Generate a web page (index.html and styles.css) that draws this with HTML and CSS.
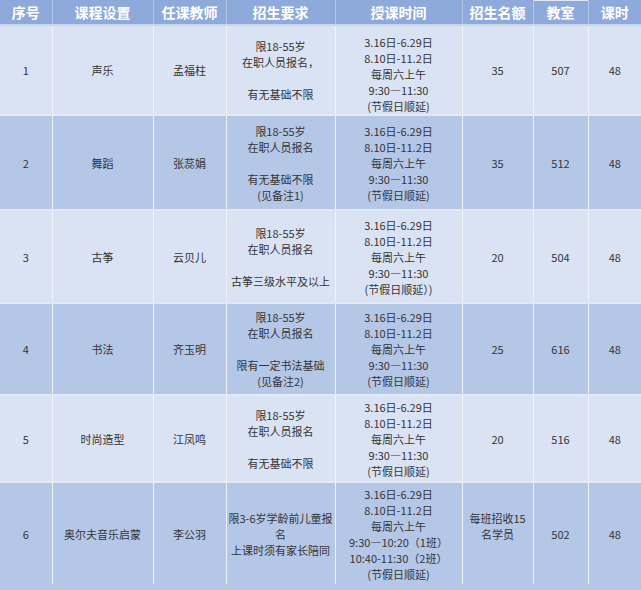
FILE: index.html
```html
<!DOCTYPE html>
<html lang="zh">
<head>
<meta charset="utf-8">
<title>课程表</title>
<link rel="stylesheet" href="styles.css">
</head>
<body>
<table class="sched">
  <colgroup>
    <col class="c1"><col class="c2"><col class="c3"><col class="c4"><col class="c5"><col class="c6"><col class="c7"><col class="c8">
  </colgroup>
  <thead>
    <tr class="head">
      <th>序号</th><th>课程设置</th><th>任课教师</th><th>招生要求</th><th>授课时间</th><th>招生名额</th><th class="sel">教室</th><th>课时</th>
    </tr>
  </thead>
  <tbody>
    <tr class="light r1">
      <td>1</td><td>声乐</td><td>孟福柱</td>
      <td>限18-55岁<br>在职人员报名，<br><br>有无基础不限</td>
      <td><div class="shift-down">3.16日-6.29日<br>8.10日-11.2日<br>每周六上午<br>9:30—11:30<br>(节假日顺延)</div></td>
      <td>35</td><td>507</td><td>48</td>
    </tr>
    <tr class="dark r2">
      <td>2</td><td>舞蹈</td><td>张蕊娟</td>
      <td>限18-55岁<br>在职人员报名<br><br>有无基础不限<br>(见备注1)</td>
      <td>3.16日-6.29日<br>8.10日-11.2日<br>每周六上午<br>9:30—11:30<br>(节假日顺延)</td>
      <td>35</td><td>512</td><td>48</td>
    </tr>
    <tr class="light r3">
      <td>3</td><td>古筝</td><td>云贝儿</td>
      <td>限18-55岁<br>在职人员报名<br><br>古筝三级水平及以上</td>
      <td>3.16日-6.29日<br>8.10日-11.2日<br>每周六上午<br>9:30—11:30<br>(节假日顺延）)</td>
      <td>20</td><td>504</td><td>48</td>
    </tr>
    <tr class="dark r4">
      <td>4</td><td>书法</td><td>齐玉明</td>
      <td>限18-55岁<br>在职人员报名<br><br>限有一定书法基础<br>(见备注2)</td>
      <td>3.16日-6.29日<br>8.10日-11.2日<br>每周六上午<br>9:30—11:30<br>(节假日顺延)</td>
      <td>25</td><td>616</td><td>48</td>
    </tr>
    <tr class="light r5">
      <td>5</td><td>时尚造型</td><td>江凤鸣</td>
      <td>限18-55岁<br>在职人员报名<br><br>有无基础不限</td>
      <td>3.16日-6.29日<br>8.10日-11.2日<br>每周六上午<br>9:30—11:30<br>(节假日顺延)</td>
      <td>20</td><td>516</td><td>48</td>
    </tr>
    <tr class="dark r6">
      <td>6</td><td>奥尔夫音乐启蒙</td><td>李公羽</td>
      <td class="nowrap">限3-6岁学龄前儿童报<br>名<br>上课时须有家长陪同</td>
      <td>3.16日-6.29日<br>8.10日-11.2日<br>每周六上午<br>9:30—10:20（1班）<br>10:40-11:30（2班）<br>(节假日顺延)</td>
      <td><div class="shift-up">每班招收15<br>名学员</div></td><td>502</td><td>48</td>
    </tr>
  </tbody>
</table>
</body>
</html>
```

FILE: styles.css
```css
html, body {
  margin: 0;
  padding: 0;
  background: #b4c7e7;
}
body {
  width: 641px;
  height: 590px;
  overflow: hidden;
  font-family: "Noto Sans CJK SC", "Noto Sans", sans-serif;
}
.sched {
  border-collapse: collapse;
  table-layout: fixed;
  width: 641px;
  color: #353535;
  font-size: 11px;
}
.c1 { width: 52px; }
.c2 { width: 101px; }
.c3 { width: 73px; }
.c4 { width: 109px; }
.c5 { width: 127px; }
.c6 { width: 71px; }
.c7 { width: 55px; }
.c8 { width: 53px; }

.sched th,
.sched td {
  padding: 0;
  text-align: center;
  vertical-align: middle;
  border-left: 1px solid #eef2fa;
  border-right: 1px solid #eef2fa;
  border-bottom: 2px solid #e3e9f5;
  overflow: visible;
  line-height: 16px;
}
.sched th:first-child,
.sched td:first-child { border-left: none; }
.sched th:last-child,
.sched td:last-child { border-right: none; }

.head th {
  height: 24px;
  background: #8eaadb;
  color: #ffffff;
  font-size: 14px;
  font-weight: 700;
  border-bottom: 2px solid #c7d5ee;
  border-left-color: #b3c5e8;
  border-right-color: #b3c5e8;
}
.head th.sel {
  box-shadow: inset 0 1px 0 #dfe7f6;
}
.light td { background: #dae3f3; }
.dark td { background: #b4c7e7; }

.nowrap { white-space: nowrap; line-height: 14.5px; }
.shift-down { padding-top: 8px; }
.shift-up { padding-bottom: 16px; }

.r1 td { height: 87px; }
.r2 td { height: 93px; }
.r3 td { height: 91px; }
.r4 td { height: 90px; }
.r5 td { height: 85px; }
.r6 td { height: 101px; border-bottom: none; }
```
